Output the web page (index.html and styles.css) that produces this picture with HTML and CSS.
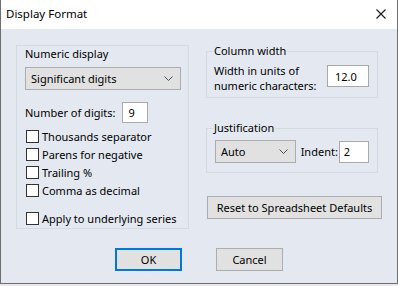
FILE: index.html
```html
<!DOCTYPE html>
<html>
<head>
<meta charset="utf-8">
<link rel="stylesheet" href="styles.css">
</head>
<body>
<div class="dialog">
  <div class="titlebar">
    <span class="title">Display Format</span>
    <svg class="close" width="10" height="10" viewBox="0 0 10 10"><path d="M0.5 0.5L9.5 9.5M9.5 0.5L0.5 9.5" stroke="#1a1a1a" stroke-width="1.1" fill="none"/></svg>
  </div>
  <div class="body">
    <div class="cols">
      <div class="group numeric">
        <div class="glabel inner">Numeric display</div>
        <div class="select wide"><span>Significant digits</span><svg class="chev" width="9" height="5" viewBox="0 0 9 5"><path d="M0.5 0.5L4.5 4.5L8.5 0.5" stroke="#505050" fill="none"/></svg></div>
        <div class="digits"><span>Number of digits:</span><div class="input digit-input">9</div></div>
        <div class="checks">
          <label class="check"><span class="box"></span>Thousands separator</label>
          <label class="check"><span class="box"></span>Parens for negative</label>
          <label class="check"><span class="box"></span>Trailing %</label>
          <label class="check"><span class="box"></span>Comma as decimal</label>
        </div>
        <label class="check apply"><span class="box"></span>Apply to underlying series</label>
      </div>
      <div class="rightcol">
        <div class="group colw">
          <div class="glabel">Column width</div>
          <div class="colw-row">
            <div class="lines"><div>Width in units of</div><div>numeric characters:</div></div>
            <div class="input width-input">12.0</div>
          </div>
        </div>
        <div class="group just">
          <div class="glabel">Justification</div>
          <div class="just-row">
            <div class="select auto"><span>Auto</span><svg class="chev" width="9" height="5" viewBox="0 0 9 5"><path d="M0.5 0.5L4.5 4.5L8.5 0.5" stroke="#505050" fill="none"/></svg></div>
            <span class="indent">Indent:</span>
            <div class="input indent-input">2</div>
          </div>
        </div>
        <button class="btn reset">Reset to Spreadsheet Defaults</button>
      </div>
    </div>
    <div class="buttons">
      <button class="btn ok">OK</button>
      <button class="btn cancel">Cancel</button>
    </div>
  </div>
</div>
</body>
</html>
```
FILE: styles.css
```css
* { box-sizing: border-box; }
html, body { margin: 0; padding: 0; }
body {
  width: 398px;
  height: 286px;
  background: #e9e9e9;
  font-family: "Noto Sans", "Open Sans", sans-serif;
  font-size: 11px;
  color: #000;
  overflow: hidden;
}
.dialog {
  width: 398px;
  height: 284px;
  border-left: 1px solid #6f6f6f;
  border-right: 1px solid #6f6f6f;
  border-bottom: 1px solid #6f6f6f;
  background: #e4e9f1;
  display: flex;
  flex-direction: column;
}
.titlebar {
  height: 29px;
  background: #fff;
  display: flex;
  align-items: center;
  justify-content: space-between;
  padding: 0 11px 1px 5px;
}
.title { font-size: 11.5px; line-height: 16px; }
.close { display: block; }
.body {
  padding: 16px 0 0 15px;
}
.cols { display: flex; gap: 17px; }
.group {
  border: 1px solid #d4dae3;
}
.numeric {
  width: 173px;
  height: 184px;
  padding: 0 8px;
}
.glabel { line-height: 14px; }
.select {
  height: 23px;
  background: #e1e1e1;
  border: 1px solid #adadad;
  display: flex;
  align-items: center;
  justify-content: space-between;
  padding: 0 7px 0 5px;
}
.select.wide { margin-top: 6px; width: 156px; }
.chev { display: block; }
.digits {
  margin-top: 12px;
  display: flex;
  align-items: center;
  gap: 6px;
  height: 20px;
}
.input {
  background: #fff;
  border: 1px solid #a9a9a9;
  display: flex;
  align-items: center;
  padding-left: 6px;
}
.digit-input { width: 26px; height: 21px; }
.checks { margin-top: 5px; }
.check {
  display: flex;
  align-items: center;
  height: 18px;
  gap: 3px;
  padding-left: 1px;
}
.box {
  width: 13px;
  height: 13px;
  border: 1px solid #333;
  background: #fff;
  flex: none;
}
.apply { margin-top: 10px; }
.rightcol { width: 175px; padding-top: 6px; }
.colw {
  width: 172px;
  height: 47px;
  padding: 0 8px 0 7px;
}
.glabel { margin-top: -8px; background: #e4e9f1; width: max-content; padding: 0 1px; margin-left: -1px; }
.numeric .glabel { margin-top: 1px; padding: 0; margin-left: 0; background: none; }
.colw-row {
  margin-top: 5px;
  display: flex;
  justify-content: space-between;
  align-items: flex-start;
}
.lines { line-height: 15px; }
.width-input { width: 42px; height: 22px; margin-top: 2px; padding-left: 7px; }
.just {
  margin-top: 30px;
  width: 172px;
  height: 45px;
  padding: 0 8px;
}
.just .glabel { margin-left: -2px; }
.just-row {
  margin-top: 5px;
  display: flex;
  align-items: center;
}
.select.auto { width: 83px; }
.indent { margin-left: 5px; }
.indent-input { width: 31px; height: 22px; margin-left: 1px; padding-left: 4px; }
.btn {
  font-family: inherit;
  font-size: 11px;
  color: #000;
  background: #e1e1e1;
  border: 1px solid #adadad;
  height: 23px;
  padding: 0;
  margin: 0;
}
.reset { margin-top: 23px; margin-left: 1px; width: 175px; display: block; }
.buttons {
  margin-top: 19px;
  margin-left: -15px;
  display: flex;
  justify-content: center;
  gap: 34px;
}
.ok { width: 67px; border: 2px solid #0078d7; }
.cancel { width: 67px; }
```
